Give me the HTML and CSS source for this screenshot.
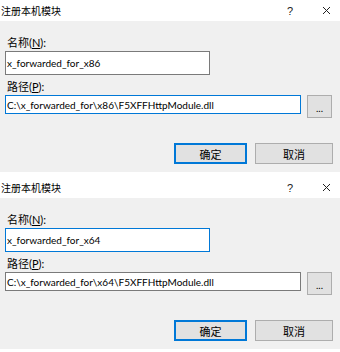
FILE: index.html
```html
<!DOCTYPE html>
<html lang="zh">
<head>
<meta charset="utf-8">
<link rel="stylesheet" href="styles.css">
</head>
<body>
<div class="dialog">
  <div class="titlebar">
    <span class="title">注册本机模块</span>
    <span class="help">?</span>
    <svg class="close" width="9" height="9" viewBox="0 0 9 9"><path d="M1 1L8 8M8 1L1 8" stroke="#222" stroke-width="1" fill="none"/></svg>
  </div>
  <div class="body">
    <div class="label"><span class="zh">名称</span>(<u>N</u>):</div>
    <div class="input name">x_forwarded_for_x86</div>
    <div class="label second"><span class="zh">路径</span>(<u>P</u>):</div>
    <div class="path-row">
      <div class="input path focus">C:\x_forwarded_for\x86\F5XFFHttpModule.dll</div>
      <div class="browse">...</div>
    </div>
    <div class="actions">
      <div class="btn default"><span class="zh">确定</span></div>
      <div class="btn"><span class="zh">取消</span></div>
    </div>
  </div>
</div>
<div class="dialog">
  <div class="titlebar">
    <span class="title">注册本机模块</span>
    <span class="help">?</span>
    <svg class="close" width="9" height="9" viewBox="0 0 9 9"><path d="M1 1L8 8M8 1L1 8" stroke="#222" stroke-width="1" fill="none"/></svg>
  </div>
  <div class="body">
    <div class="label"><span class="zh">名称</span>(<u>N</u>):</div>
    <div class="input name focus">x_forwarded_for_x64</div>
    <div class="label second"><span class="zh">路径</span>(<u>P</u>):</div>
    <div class="path-row">
      <div class="input path">C:\x_forwarded_for\x64\F5XFFHttpModule.dll</div>
      <div class="browse">...</div>
    </div>
    <div class="actions">
      <div class="btn default"><span class="zh">确定</span></div>
      <div class="btn"><span class="zh">取消</span></div>
    </div>
  </div>
</div>
</body>
</html>
```
FILE: styles.css
```css
* { box-sizing: border-box; }
html, body { margin: 0; padding: 0; background: #fff; }
body {
  font-family: Lato, "Noto Sans CJK SC", sans-serif;
  font-size: 10px;
  color: #000;
  width: 340px;
  overflow: hidden;
}
.zh { font-family: "Noto Sans CJK SC", sans-serif; font-size: 11px; }
.dialog + .dialog { margin-top: 5px; }
.titlebar {
  height: 21px;
  display: flex;
  align-items: center;
  background: #fff;
}
.title {
  font-family: "Noto Sans CJK SC", sans-serif;
  font-size: 10px;
  margin-left: 1px;
  flex: 1;
}
.help {
  font-family: "Liberation Sans", sans-serif;
  font-size: 11px;
  color: #222;
  margin-right: 29px;
}
.close { margin-right: 9px; }
.body {
  background: #f0f0f0;
  padding: 13px 7px 8px 5px;
}
.label {
  height: 16px;
  line-height: 16px;
  padding-left: 2px;
  font-size: 11px;
}
.label.second { margin-top: 3px; }
.input {
  background: #fff;
  border: 1px solid #7a7a7a;
  padding-left: 1px;
  white-space: nowrap;
  display: flex;
  align-items: center;
}
.input.focus { border-color: #0078d7; }
.input.name { width: 205px; height: 24px; margin-top: 1px; }
.path-row {
  display: flex;
  align-items: flex-start;
  gap: 6px;
  margin-top: 1px;
}
.input.path { width: 296px; height: 19px; }
.browse {
  width: 25px;
  height: 23px;
  background: #e1e1e1;
  border: 1px solid #adadad;
  display: flex;
  align-items: center;
  justify-content: center;
  font-size: 10px;
  line-height: 1;
  padding-top: 2px;
}
.actions {
  display: flex;
  justify-content: flex-end;
  gap: 8px;
  margin-top: 25px;
}
.btn {
  width: 78px;
  height: 21px;
  background: #e1e1e1;
  border: 1px solid #adadad;
  display: flex;
  align-items: center;
  justify-content: center;
}
.btn.default { width: 73px; border: 2px solid #0078d7; }
```
